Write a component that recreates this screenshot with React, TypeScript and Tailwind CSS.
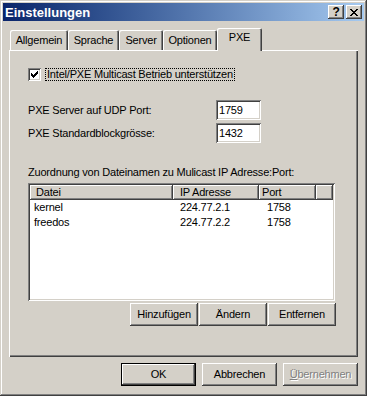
const raised =
  'shadow-[inset_-1px_-1px_0_#404040,inset_1px_1px_0_#fff,inset_-2px_-2px_0_#808080,inset_2px_2px_0_#d4d0c8]';
const sunken =
  'shadow-[inset_1px_1px_0_#808080,inset_-1px_-1px_0_#fff,inset_2px_2px_0_#404040,inset_-2px_-2px_0_#d4d0c8]';

function Check() {
  const cols = [5, 6, 7, 6, 5, 4, 3];
  return (
    <svg width="13" height="13" viewBox="0 0 13 13" shapeRendering="crispEdges" className="block">
      {cols.map((y, i) => (
        <rect key={i} x={3 + i} y={y} width="1" height="3" fill="#000" />
      ))}
    </svg>
  );
}

function CloseGlyph() {
  const rows = [0, 1, 2, 3, 4, 5, 6];
  return (
    <svg width="8" height="7" viewBox="0 0 8 7" shapeRendering="crispEdges" className="block">
      {rows.map((i) => (
        <g key={i}>
          <rect x={i} y={i} width="2" height="1" fill="#000" />
          <rect x={6 - i} y={i} width="2" height="1" fill="#000" />
        </g>
      ))}
    </svg>
  );
}

function Tab({ label, w }: { label: string; w: string }) {
  return (
    <div
      className={`${w} h-[20px] mt-[2px] flex items-center justify-center rounded-t-[2px] shadow-[inset_1px_1px_0_#fff,inset_-1px_0_0_#404040,inset_-2px_0_0_#808080]`}
    >
      {label}
    </div>
  );
}

function Btn({ children, w = 'w-[75px]' }: { children: React.ReactNode; w?: string }) {
  return (
    <div className={`${w} h-[23px] flex items-center justify-center ${raised}`}>{children}</div>
  );
}

const rows = [
  { file: 'kernel', ip: '224.77.2.1', port: '1758' },
  { file: 'freedos', ip: '224.77.2.2', port: '1758' },
];

export default function App() {
  return (
    <div className="w-[367px] h-[396px] bg-[#d4d0c8] p-[3px] flex flex-col text-[11px] leading-[13px] tracking-[-0.2px] text-black font-['Liberation_Sans',Arial,sans-serif] shadow-[inset_-1px_-1px_0_#404040,inset_1px_1px_0_#d4d0c8,inset_-2px_-2px_0_#808080,inset_2px_2px_0_#fff]">
      {/* Title bar */}
      <div className="h-[18px] flex items-center pl-[2px] pr-[2px] bg-linear-to-r from-[#0a246a] to-[#a6caf0]">
        <span className="font-bold text-white text-[13px] tracking-[0px] flex-1">Einstellungen</span>
        <div className={`w-[16px] h-[14px] flex items-center justify-center bg-[#d4d0c8] ${raised}`}>
          <span className="font-bold text-[12px] leading-[12px] -mt-[1px]">?</span>
        </div>
        <div className={`w-[16px] h-[14px] ml-[2px] flex items-center justify-center bg-[#d4d0c8] ${raised}`}>
          <CloseGlyph />
        </div>
      </div>

      {/* Tabs */}
      <div className="mt-[7px] ml-[7px] h-[23px] flex relative z-10">
        <Tab label="Allgemein" w="w-[58px]" />
        <Tab label="Sprache" w="w-[51px]" />
        <Tab label="Server" w="w-[44px]" />
        <Tab label="Optionen" w="w-[54px]" />
        <div className="w-[45px] h-[23px] flex justify-center pt-[3px] bg-[#d4d0c8] rounded-t-[2px] shadow-[inset_1px_1px_0_#fff,inset_-1px_0_0_#404040,inset_-2px_0_0_#808080]">
          PXE
        </div>
      </div>

      {/* Panel */}
      <div className="ml-[6px] -mt-[1px] w-[349px] h-[307px] pl-[19px] pt-[18px] flex flex-col shadow-[inset_1px_1px_0_#fff,inset_-1px_-1px_0_#404040,inset_-2px_-2px_0_#808080]">
        <div className="flex items-center h-[13px]">
          <div className={`w-[13px] h-[13px] bg-white ${sunken}`}>
            <Check />
          </div>
          <div className="ml-[4px] h-[13px] px-[1px] border border-dotted border-black flex items-center">
            Intel/PXE Multicast Betrieb unterstützen
          </div>
        </div>

        <div className="mt-[19px] flex items-center h-[20px]">
          <span className="w-[188px]">PXE Server auf UDP Port:</span>
          <div className={`w-[45px] h-[20px] bg-white pl-[3px] flex items-center ${sunken}`}>1759</div>
        </div>
        <div className="mt-[3px] flex items-center h-[20px]">
          <span className="w-[188px]">PXE Standardblockgrösse:</span>
          <div className={`w-[45px] h-[20px] bg-white pl-[3px] flex items-center ${sunken}`}>1432</div>
        </div>

        <div className="mt-[23px]">Zuordnung von Dateinamen zu Mulicast IP Adresse:Port:</div>

        {/* List view */}
        <div className={`mt-[4px] w-[307px] h-[118px] bg-white p-[2px] ${sunken}`}>
          <div className="flex h-[15px] bg-[#d4d0c8]">
            <div className={`w-[143px] pl-[6px] flex items-center ${raised}`}>Datei</div>
            <div className={`w-[86px] pl-[7px] flex items-center ${raised}`}>IP Adresse</div>
            <div className={`w-[57px] pl-[3px] flex items-center ${raised}`}>Port</div>
            <div className={`flex-1 ${raised}`} />
          </div>
          {rows.map((r) => (
            <div key={r.file} className="flex h-[15px] items-center">
              <span className="w-[143px] pl-[4px]">{r.file}</span>
              <span className="w-[86px] pl-[7px]">{r.ip}</span>
              <span className="pl-[8px]">{r.port}</span>
            </div>
          ))}
        </div>

        <div className="mt-[2px] ml-[102px] flex gap-[1px]">
          <Btn w="w-[68px]">Hinzufügen</Btn>
          <Btn w="w-[68px]">Ändern</Btn>
          <Btn w="w-[68px]">Entfernen</Btn>
        </div>
      </div>

      {/* Dialog buttons */}
      <div className="mt-[6px] mr-[6px] flex justify-end gap-[6px]">
        <div className="w-[75px] h-[23px] flex items-center justify-center shadow-[inset_0_0_0_1px_#000,inset_-2px_-2px_0_#404040,inset_2px_2px_0_#fff,inset_-3px_-3px_0_#808080]">
          OK
        </div>
        <Btn>Abbrechen</Btn>
        <Btn>
          <span className="text-[#808080] [text-shadow:1px_1px_0_#fff]">
            <span className="underline">Ü</span>bernehmen
          </span>
        </Btn>
      </div>
    </div>
  );
}
